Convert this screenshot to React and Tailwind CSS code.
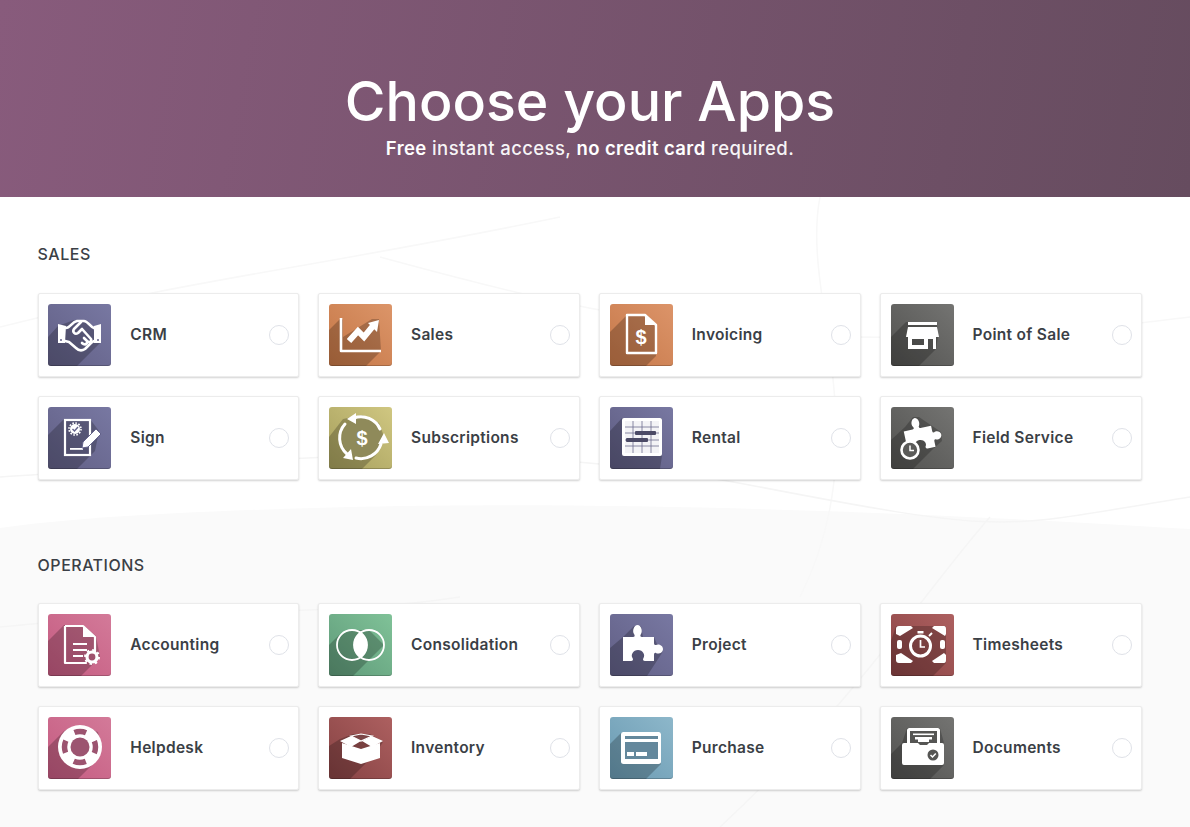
const puzzle =
  'M13 23 H23 C25 23 25 21 24 20 C22 17 24 11 27.5 11 C31 11 33 17 31 20 C30 21 30 23 32 23 H44 V29 C44 31 45 31 46 31 C48 29.5 53 31 53 35 C53 39 48 40.5 46 39 C45 38.5 44 39 44 41 V47 H35 C33 47 32.5 45 33.5 44 C35.5 41 33 36 28 36 C23 36 20.5 41 22.5 44 C23.5 45 23 47 21 47 H13 Z';

const Dollar = ({ x, y, size = 20, fill = 'white' }) => (
  <text x={x} y={y} fontSize={size} fontWeight="700" fill={fill} textAnchor="middle" fontFamily="'Liberation Sans', sans-serif">$</text>
);

const icons = {
  crm: {
    tile: 'from-[#615f85] to-[#7878a2]',
    shadow: '0,33 10,22 26,16 40,17 53,38 29,62 0,62',
    art: (
      <g>
        <path d="M10 20 L18 22 L17 39 L10 39 Z M46 22 L53 20 L53 39 L46 39 Z" fill="white" />
        <circle cx="13" cy="36" r="1" fill="#63628a" />
        <circle cx="50" cy="36" r="1" fill="#63628a" />
        <g fill="none" stroke="white" strokeWidth="2.6" strokeLinejoin="round" strokeLinecap="round">
          <path d="M18 24 C22 24 24 18 29 17 L36 17 C40 17 42 23 46 24" />
          <path d="M17 37 L21 38 L28 44 C31 47 34 47 37 45 L43 39 L46 37" />
          <path d="M33 18 L26 25 C24 28 27 31 30 29 L34 25 L43 35 C44 38 41 39 39 37 L36 34 M39 38 C39 41 36 41 34 39" />
        </g>
      </g>
    ),
  },
  sales: {
    tile: 'from-[#c47645] to-[#dc9569]',
    shadow: '0,26 12,14 14,16 14,33 43,15 50,15 52,47 37,62 0,62',
    art: (
      <g>
        <path d="M12 14 V47 H52" fill="none" stroke="white" strokeWidth="2.6" strokeLinejoin="round" />
        <path d="M20 37 L29 27 L35 33 L44 22" fill="none" stroke="white" strokeWidth="6" />
        <path d="M39 19 L50 16 L48 28 Z" fill="white" />
      </g>
    ),
  },
  invoicing: {
    tile: 'from-[#c67849] to-[#dc9469]',
    shadow: '0,28 17,11 37,11 46,20 46,52 36,62 0,62',
    art: (
      <g>
        <path d="M17 11 H35 L46 21 V49 H17 Z" fill="none" stroke="white" strokeWidth="2.4" strokeLinejoin="round" />
        <path d="M35 11 V21 H46 Z" fill="white" />
        <Dollar x={31} y={40} />
      </g>
    ),
  },
  pos: {
    tile: 'from-[#525250] to-[#747472]',
    shadow: '0,33 15,18 46,18 47,33 45,45 28,62 0,62',
    art: (
      <g fill="white">
        <rect x="17" y="18" width="29" height="3" />
        <path d="M17 23 H46 L48 33 H15 Z" />
        <path fillRule="evenodd" d="M17 33 H45 V45 H42 V35 H37 V45 H17 Z M21 35 V41 H33 V35 Z" />
      </g>
    ),
  },
  sign: {
    tile: 'from-[#615f85] to-[#7878a2]',
    shadow: '0,28 16,12 42,12 51,24 47,44 29,62 0,62',
    art: (
      <g>
        <rect x="17" y="13" width="25" height="35" fill="none" stroke="white" strokeWidth="2.2" />
        <circle cx="27" cy="22" r="5" fill="white" />
        <circle cx="27" cy="22" r="6" fill="none" stroke="white" strokeWidth="1.6" strokeDasharray="1.6 1.5" />
        <path d="M24.5 22 L26.5 24 L30 20" fill="none" stroke="#63628a" strokeWidth="1.4" />
        <rect x="22" y="41" width="13" height="1.8" fill="white" />
        <path d="M48 22 L53 27 L40 40 L34 41 L35 35 Z" fill="white" stroke="#63628a" strokeWidth="1" />
      </g>
    ),
  },
  subs: {
    tile: 'from-[#a59e5c] to-[#d0c781]',
    shadow: '0,30 14,12 33,8 50,16 56,32 47,48 33,62 0,62',
    art: (
      <g>
        <circle cx="33" cy="31" r="20" fill="#8f8a5a" />
        <g fill="none" stroke="white" strokeWidth="3" strokeLinecap="round">
          <path d="M25 11 A21 21 0 0 1 51 22" />
          <path d="M52 37 A21 21 0 0 1 27 51" />
          <path d="M16 17 A21 21 0 0 0 18 47" />
        </g>
        <path d="M18 12 L27 6 L27 17 Z M55 26 L49 37 L60 36 Z M24 53 L14 51 L22 42 Z" fill="white" />
        <Dollar x={33} y={38} />
      </g>
    ),
  },
  rental: {
    tile: 'from-[#5d5b80] to-[#7878a2]',
    shadow: '0,24 12,11 52,11 52,49 50,62 0,62',
    art: (
      <g>
        <rect x="12" y="11" width="40" height="38" rx="2" fill="white" />
        <rect x="15" y="14" width="34" height="32" fill="#f3f3f6" />
        <g stroke="#6d6c90" strokeWidth="0.8">
          <path d="M15 20 H49 M15 26 H49 M15 33 H49 M15 39 H49 M23 14 V46 M32 14 V46 M41 14 V46" />
        </g>
        <rect x="25" y="24" width="21" height="4" rx="1" fill="#4b4a66" />
        <rect x="16" y="31" width="22" height="4" rx="1" fill="#4b4a66" />
      </g>
    ),
  },
  field: {
    tile: 'from-[#525250] to-[#747472]',
    shadow: '0,33 14,20 22,10 28,10 50,25 51,34 42,42 22,62 0,62',
    art: (
      <g>
        <path d={puzzle} fill="white" transform="translate(-1 -3) rotate(-12 32 30) translate(3 3) scale(0.9)" />
        <circle cx="19" cy="43" r="8.5" fill="#5b5b59" stroke="white" strokeWidth="2.6" />
        <rect x="16.5" y="31.5" width="5" height="2" fill="white" />
        <path d="M19 38.5 V43.5 H23" fill="none" stroke="white" strokeWidth="1.5" />
      </g>
    ),
  },
  accounting: {
    tile: 'from-[#c45a80] to-[#d37a99]',
    shadow: '0,27 16,11 35,11 48,22 52,43 33,62 0,62',
    art: (
      <g>
        <path d="M17 12 H35 L47 23 V38 M38 49 H17 Z" fill="none" stroke="white" strokeWidth="2.2" strokeLinejoin="round" />
        <path d="M17 12 V49" stroke="white" strokeWidth="2.2" />
        <path d="M35 12 V23 H47 Z" fill="white" />
        <path d="M25 30 H39 M25 36 H39 M25 42 H35" stroke="white" strokeWidth="2" />
        <circle cx="44" cy="43" r="5" fill="none" stroke="white" strokeWidth="3.2" />
        <circle cx="44" cy="43" r="7" fill="none" stroke="white" strokeWidth="2" strokeDasharray="2.4 3.1" />
      </g>
    ),
  },
  consolidation: {
    tile: 'from-[#5f9a79] to-[#80c298]',
    shadow: '0,31 10,21 22,16 40,16 55,31 40,46 24,62 0,62',
    art: (
      <g>
        <path d="M31.5 18.5 A15 15 0 0 1 31.5 43.5 A15 15 0 0 1 31.5 18.5 Z" fill="white" />
        <circle cx="23" cy="31" r="15" fill="none" stroke="white" strokeWidth="1.8" />
        <circle cx="40" cy="31" r="15" fill="none" stroke="white" strokeWidth="1.8" />
      </g>
    ),
  },
  project: {
    tile: 'from-[#615f85] to-[#7878a2]',
    shadow: '0,34 13,23 24,12 31,12 33,23 44,23 47,30 53,34 52,39 37,62 0,62',
    art: <path d={puzzle} fill="white" />,
  },
  timesheets: {
    tile: 'from-[#8a4344] to-[#ad6060]',
    shadow: '0,27 5,12 55,12 55,49 42,62 0,62',
    art: (
      <g fill="white">
        <path d="M8 12 H20 L22 14 L9 22 L5 20 V15 Q5 12 8 12 Z" />
        <path d="M55 12 H43 L41 14 L54 22 L55 20 V15 Q55 12 53 12 Z" />
        <path d="M8 49 H20 L22 47 L10 39 L5 41 V46 Q5 49 8 49 Z" />
        <path d="M55 49 H43 L41 47 L53 39 L55 41 V46 Q55 49 53 49 Z" />
        <rect x="6" y="26" width="5" height="9" rx="2" />
        <rect x="49" y="26" width="5" height="9" rx="2" />
        <rect x="26.5" y="17" width="6" height="2.5" />
        <circle cx="29.5" cy="32" r="10" fill="none" stroke="white" strokeWidth="3" />
        <path d="M29.5 26 V33 H34" fill="none" stroke="white" strokeWidth="1.7" />
        <path d="M38 22 L41 19" stroke="white" strokeWidth="2" />
      </g>
    ),
  },
  helpdesk: {
    tile: 'from-[#c45a80] to-[#d37a99]',
    shadow: '0,30 16,14 32,8 50,15 54,30 47,45 30,62 0,62',
    art: (
      <g>
        <circle cx="32" cy="30" r="22" fill="white" />
        <circle cx="32" cy="30" r="9.5" fill="#9c5470" />
        <circle cx="32" cy="30" r="15.5" fill="none" stroke="#9c5470" strokeWidth="5.5" strokeDasharray="12.3 12" strokeDashoffset="6.1" transform="rotate(-90 32 30)" />
      </g>
    ),
  },
  inventory: {
    tile: 'from-[#864243] to-[#ad6060]',
    shadow: '0,29 11,22 24,17 41,17 54,25 47,36 21,62 0,62',
    art: (
      <g>
        <path d="M14 26 L33 32 V47 L14 41 Z M52 26 L33 32 V47 L52 41 Z" fill="white" transform="translate(-1 0)" />
        <path d="M11 24 L22 19 L32 24 L22 30 Z M54 24 L43 19 L33 24 L43 30 Z" fill="white" />
        <path d="M22 19 L32 17 L43 19 L32 24 Z" fill="#7a4546" stroke="white" strokeWidth="1.2" />
      </g>
    ),
  },
  purchase: {
    tile: 'from-[#6a9ab2] to-[#8db7ca]',
    shadow: '0,27 11,16 51,16 51,47 36,62 0,62',
    art: (
      <g>
        <rect x="11" y="15" width="40" height="32" rx="2.5" fill="white" />
        <rect x="15" y="19" width="33" height="3" fill="#64889c" />
        <rect x="15" y="25" width="33" height="17" fill="#64889c" />
        <rect x="17" y="35" width="7" height="4" fill="white" />
        <rect x="26" y="35" width="11" height="4" fill="white" />
      </g>
    ),
  },
  documents: {
    tile: 'from-[#525250] to-[#747472]',
    shadow: '0,37 11,26 16,11 49,11 53,26 53,48 39,62 0,62',
    art: (
      <g>
        <rect x="16" y="11" width="33" height="18" rx="2.5" fill="white" />
        <rect x="19" y="14" width="27" height="14" fill="#555553" />
        <rect x="22" y="16.5" width="21" height="1.6" fill="white" />
        <path d="M24 20 H41 V22.5 H38 V25 H27 V22.5 H24 Z" fill="white" />
        <path fillRule="evenodd" d="M13 26 H27 L29 28 H36 L38 26 H51 Q53 26 53 28 V46 Q53 48 51 48 H13 Q11 48 11 46 V28 Q11 26 13 26 Z" fill="white" />
        <circle cx="42" cy="38" r="5.5" fill="#555553" />
        <path d="M39.5 38 L41.5 40 L44.8 36.4" fill="none" stroke="white" strokeWidth="1.5" />
      </g>
    ),
  },
};

const sections = [
  {
    title: 'SALES',
    apps: [
      ['CRM', 'crm'],
      ['Sales', 'sales'],
      ['Invoicing', 'invoicing'],
      ['Point of Sale', 'pos'],
      ['Sign', 'sign'],
      ['Subscriptions', 'subs'],
      ['Rental', 'rental'],
      ['Field Service', 'field'],
    ],
  },
  {
    title: 'OPERATIONS',
    apps: [
      ['Accounting', 'accounting'],
      ['Consolidation', 'consolidation'],
      ['Project', 'project'],
      ['Timesheets', 'timesheets'],
      ['Helpdesk', 'helpdesk'],
      ['Inventory', 'inventory'],
      ['Purchase', 'purchase'],
      ['Documents', 'documents'],
    ],
  },
];

function AppIcon({ name }) {
  const icon = icons[name];
  return (
    <div className={`w-[63px] h-[62px] shrink-0 rounded-[3px] overflow-hidden bg-linear-to-tr shadow-[inset_0_-1px_0_rgba(0,0,0,0.2)] ${icon.tile}`}>
      <svg width="63" height="62" viewBox="0 0 63 62">
        <polygon points={icon.shadow} fill="black" fillOpacity="0.22" />
        {icon.art}
      </svg>
    </div>
  );
}

function AppCard({ label, name }) {
  return (
    <div className="h-[84px] flex items-center pl-[9.7px] pr-[9px] bg-white border border-[#ececec] rounded-[2px] shadow-[0_1px_2px_rgba(0,0,0,0.18)]">
      <AppIcon name={name} />
      <span className="ml-[19px] flex-1 text-[15.5px] font-semibold tracking-[0.3px] text-[#3b3f46]">{label}</span>
      <span className="w-[20px] h-[20px] rounded-full border border-[#dfe2e8] bg-white" />
    </div>
  );
}

export default function App() {
  return (
    <div className="h-[827px] overflow-hidden bg-white font-['Inter','Liberation_Sans',sans-serif]">
      <header className="relative h-[197px] pr-[10px] pt-[69px] text-center text-white bg-linear-[100deg] from-[#885b7c] to-[#664c5f]">
        <h1 className="text-[55.5px] leading-[64px] font-medium">Choose your Apps</h1>
        <p className="mt-[2px] text-[18.5px] leading-[26px] font-medium tracking-[0.4px] text-white/95">
          <strong className="font-semibold text-white">Free</strong> instant access, <strong className="font-semibold text-white">no credit card</strong> required.
        </p>
      </header>

      <main className="relative h-[630px] pl-[37.6px] pr-[48.4px] pt-[45px] bg-white">
        {/* faint paper texture behind the cards */}
        <svg className="absolute inset-0 w-full h-full" viewBox="0 0 1190 630" fill="none" stroke="#f8f8f8" strokeWidth="1.5">
          <path d="M0 331 C80 320 200 313 400 309 C700 305 1000 320 1190 332 V630 H0 Z" fill="#fafafa" stroke="none" />
          <path d="M0 130 C200 80 320 70 560 20 M380 60 C600 120 800 170 1190 120 M820 0 C800 100 880 240 800 400" />
          <path d="M0 280 C300 260 500 240 760 290 S1000 330 1190 300 M990 320 C920 400 860 500 720 630 M0 430 C200 410 330 420 460 400" stroke="#f5f5f5" />
        </svg>
        {sections.map((section, i) => (
          <section key={section.title} className={`relative ${i > 0 ? 'mt-[73px]' : ''}`}>
            <h2 className={`text-[16px] leading-[24px] font-medium tracking-[0.5px] text-[#3b3f46] ${i > 0 ? 'mb-[26px]' : 'mb-[27px]'}`}>{section.title}</h2>
            <div className="grid grid-cols-4 gap-x-[19px] gap-y-[19px]">
              {section.apps.map(([label, name]) => (
                <AppCard key={name} label={label} name={name} />
              ))}
            </div>
          </section>
        ))}
      </main>
    </div>
  );
}
